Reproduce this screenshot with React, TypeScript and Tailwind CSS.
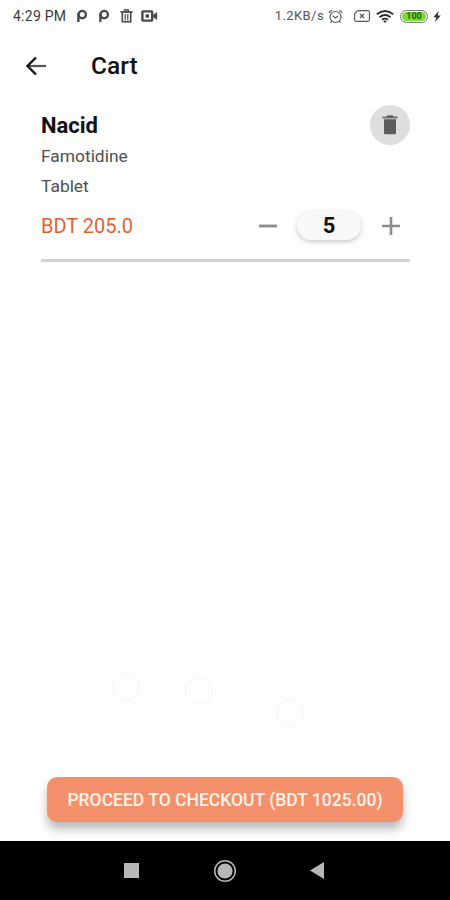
import { useState } from "react";

const PRICE = 205;

// App notification mark: a ring standing on a short stem
function RingMark() {
  return (
    <svg viewBox="0 0 12 14" className="h-3.5 w-3" fill="none" stroke="#4a4a4a" strokeWidth="2.4">
      <circle cx="6.2" cy="5.6" r="3.7" />
      <line x1="2.4" y1="4.5" x2="2.4" y2="13" />
    </svg>
  );
}

function OutlineBin() {
  return (
    <svg viewBox="0 0 13 14" className="h-3.5 w-[13px]" fill="none" stroke="#4a4a4a">
      <path d="M.5 3h12" strokeWidth="1.8" />
      <path d="M4.5 2V1h4v1" strokeWidth="1.3" />
      <path d="M2.3 3.5v9.2h8.4V3.5" strokeWidth="1.6" />
      <path d="M5.2 5v6.5M7.8 5v6.5" strokeWidth="1.2" />
    </svg>
  );
}

function Recorder() {
  return (
    <svg viewBox="0 0 17 12" className="h-3 w-[17px]" fill="none">
      <rect x="1.4" y="1.4" width="9.8" height="9.2" rx=".6" stroke="#4a4a4a" strokeWidth="2.4" />
      <rect x="4.6" y="4.3" width="3.4" height="3.4" fill="#4a4a4a" />
      <path d="M12 5 16.2 2v8L12 7z" fill="#4a4a4a" />
    </svg>
  );
}

function AlarmClock() {
  return (
    <svg viewBox="0 0 15 15" className="h-[15px] w-[15px]" fill="none" stroke="#5c5c5c" strokeWidth="1.2">
      <circle cx="7.5" cy="8" r="5.5" />
      <path d="M.8 3.8 3.8 1.2M14.2 3.8 11.2 1.2M5 7l2.5 2L10 7M3.7 12.2l-1.2 1.5M11.3 12.2l1.2 1.5" />
    </svg>
  );
}

function NoSim() {
  return (
    <svg viewBox="0 0 16 12" className="h-3 w-4" fill="none" stroke="#555" strokeWidth="1.1">
      <path d="M3.8.6h10q1.6 0 1.6 1.6v7.6q0 1.6-1.6 1.6H2.2Q.6 11.4.6 9.8V3.8z" />
      <path d="m6 4 4 4M10 4 6 8" strokeWidth="1.3" />
    </svg>
  );
}

function Wifi() {
  return (
    <svg viewBox="0 0 18 13" className="h-[13px] w-[18px]" fill="none" stroke="#2b2b2b">
      <path d="M.8 4.3Q9-2.3 17.2 4.3" strokeWidth="1.9" />
      <path d="M3.5 7.2Q9 2.7 14.5 7.2" strokeWidth="1.9" />
      <path d="M6 9.8Q9 7.4 12 9.8" strokeWidth="1.8" />
      <path d="M7.2 11 9 12.9 10.8 11Q9 9.8 7.2 11z" fill="#2b2b2b" stroke="none" />
    </svg>
  );
}

function StatusBar() {
  return (
    <div className="flex h-8 items-center pl-[13px] pr-[9px] text-[#3a3a3a]">
      <span className="w-[63px] whitespace-nowrap text-[14px] tracking-[0.25px]">4:29 PM</span>
      <div className="flex items-center">
        <RingMark />
        <span className="w-[10px]" />
        <RingMark />
        <span className="w-[10px]" />
        <OutlineBin />
        <span className="w-2" />
        <Recorder />
      </div>
      <div className="ml-auto flex items-center">
        <span className="mr-1 whitespace-nowrap text-[13px] tracking-[0.4px] text-[#555]">1.2KB/s</span>
        <AlarmClock />
        <span className="w-[11px]" />
        <NoSim />
        <span className="w-1.5" />
        <Wifi />
        <span className="w-1.5" />
        <div className="flex h-[13px] w-[28px] rounded-full border border-[#777] p-px">
          <div className="flex flex-1 items-center justify-center rounded-full bg-[#78dc32] text-[9px] font-bold leading-none text-[#2d5c13]">
            100
          </div>
        </div>
        <svg viewBox="0 0 8 11" className="ml-[5px] h-[11px] w-2" fill="#333">
          <path d="M5.8 0 .2 6.3h3L2 11l5.8-6.5H4.7z" />
        </svg>
      </div>
    </div>
  );
}

function CartItem({ qty, onChange }: { qty: number; onChange: (n: number) => void }) {
  return (
    <div className="ml-[41px] mr-10 border-b-[3px] border-[#d4d4d4]">
      <div className="flex h-[156px] justify-between">
        <div className="flex flex-col pt-[7px]">
          <h2 className="h-8 text-[22px] font-bold leading-8 text-[#111]">Nacid</h2>
          <p className="h-[30px] text-[17.4px] leading-[29px] text-[#505050]">Famotidine</p>
          <p className="h-[30px] text-[17.4px] leading-[29px] text-[#505050]">Tablet</p>
          <p className="pt-1 text-[20px] leading-[40px] text-[#e2622f]">BDT {PRICE.toFixed(1)}</p>
        </div>
        <div className="flex flex-col items-end">
          <button
            type="button"
            aria-label="Remove"
            onClick={() => onChange(1)}
            className="mt-[2px] flex size-10 items-center justify-center rounded-full bg-[#dedede]"
          >
            <svg viewBox="0 0 16 20" className="h-5 w-4">
              <path d="M.5 1.5h4L5.500.5h5l1 1h4v2H.5z" fill="#737373" />
              <path d="M5.500.8h5l1 1.200h-7z" fill="#494949" />
              <path d="M2 4.300h12v13.700q0 1.200-1.200 1.200H3.200Q2 19.200 2 18z" fill="#5c5c5c" />
            </svg>
          </button>
          <div className="mr-[10px] mt-[65px] flex h-[31px] items-center">
            <button type="button" aria-label="Less" onClick={() => onChange(Math.max(1, qty - 1))}>
              <svg viewBox="0 0 18 18" className="size-[18px]" stroke="#8c8c8c" strokeWidth="2.8">
                <path d="M0 9h18" />
              </svg>
            </button>
            <span className="ml-5 mr-[21px] flex h-[29px] w-[64px] items-center justify-center rounded-full bg-[#f8f8f8] pt-px text-[22px] font-bold leading-none text-[#111] shadow-[0_2px_5px_rgba(0,0,0,0.2)]">
              {qty}
            </span>
            <button type="button" aria-label="More" onClick={() => onChange(qty + 1)}>
              <svg viewBox="0 0 18 18" className="size-[18px]" stroke="#8c8c8c" strokeWidth="2.6">
                <path d="M0 9h18M9 0v18" />
              </svg>
            </button>
          </div>
        </div>
      </div>
    </div>
  );
}

export default function App() {
  const [qty, setQty] = useState(5);

  return (
    <div className="flex h-[900px] w-[450px] flex-col overflow-hidden bg-[#fefefe] font-[Roboto,sans-serif]">
      <StatusBar />

      <header className="flex h-[71px] items-center pl-[26px]">
        <svg viewBox="0 0 20 20" className="mb-[4px] h-5 w-5" fill="none">
          <path d="M2 10h18" stroke="#555" strokeWidth="2.2" />
          <path d="M10 1.5 1.5 10l8.5 8.5" stroke="#151515" strokeWidth="2.4" />
        </svg>
        <h1 className="mb-[2px] ml-[45px] text-[24.5px] font-medium text-[#111]">Cart</h1>
      </header>

      <CartItem qty={qty} onChange={setQty} />

      <div className="flex flex-1 items-end pb-[50px] pl-[112px]">
        <div className="mb-[26px] size-7 rounded-full border border-[#f5f5f5]" />
        <div className="mb-[22px] ml-[45px] size-7 rounded-full border border-[#f5f5f5]" />
        <div className="ml-[63px] size-7 rounded-full border border-[#f5f5f5]" />
      </div>

      <div className="px-[47px] pb-[19px]">
        <button
          type="button"
          className="flex h-[45px] w-full items-center justify-center whitespace-nowrap rounded-[10px] bg-[#f4906b] pt-px text-[17.5px] font-medium text-[#fff3ea] shadow-[0_7px_10px_rgba(0,0,0,0.27)]"
        >
          PROCEED TO CHECKOUT (BDT {(PRICE * qty).toFixed(2)})
        </button>
      </div>

      <nav className="flex h-[59px] items-center bg-black pl-[124px]">
        <div className="size-[15px] bg-[#b8b8b8]" />
        <svg viewBox="0 0 24 24" className="ml-[74px] size-6">
          <circle cx="12" cy="12" r="10.3" fill="none" stroke="#b8b8b8" strokeWidth="1.5" />
          <circle cx="12" cy="12" r="7.6" fill="#b8b8b8" />
        </svg>
        <svg viewBox="0 0 14 17" className="ml-[73px] h-[17px] w-3.5" fill="#b8b8b8">
          <path d="M0 8.500 14 0v17z" />
        </svg>
      </nav>
    </div>
  );
}
